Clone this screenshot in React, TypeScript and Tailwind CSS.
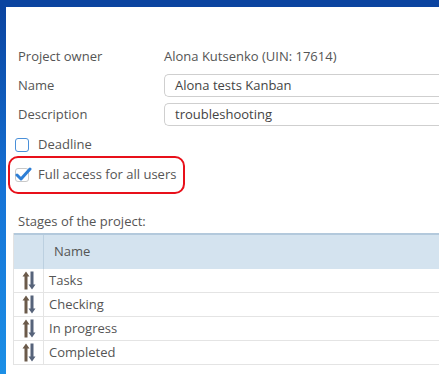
import React from 'react'

function SortIcon() {
  return (
    <svg width="14" height="19" viewBox="0 0 14 19">
      <path d="M4 0.5 L7.5 5.5 H5.5 V18.5 H2.5 V5.5 H0.5 Z" fill="#6b5a4a" />
      <path d="M10 18.5 L13.5 13.5 H11.5 V0.5 H8.5 V13.5 H6.5 Z" fill="#56637a" />
    </svg>
  )
}

const stages = ['Tasks', 'Checking', 'In progress', 'Completed']

export default function App() {
  return (
    <div className="w-[439px] h-[374px] overflow-hidden flex flex-col bg-[#0b44a0] text-[13px] text-[#555]" style={{ fontFamily: '"Open Sans", "Noto Sans", sans-serif' }}>
      <div className="h-[7px] shrink-0" />
      <div className="flex flex-1">
        <div className="w-[6px] bg-gradient-to-b from-[#0b44a0] via-[#1673d6] to-[#1c8fe6]" />
        <div className="flex-1 bg-white pl-[12px] pt-[39px]">
          <div className="flex items-center h-[22px]">
            <div className="w-[146px]">Project owner</div>
            <div>Alona Kutsenko (UIN: 17614)</div>
          </div>
          <div className="flex items-center mt-[6px]">
            <div className="w-[146px]">Name</div>
            <div className="flex-1 h-[23px] border border-[#cfcfcf] border-r-0 rounded-l-[5px] flex items-center px-[10px] text-[#444]">Alona tests Kanban</div>
          </div>
          <div className="flex items-center mt-[6px]">
            <div className="w-[146px]">Description</div>
            <div className="flex-1 h-[23px] border border-[#cfcfcf] border-r-0 rounded-l-[5px] flex items-center px-[10px] text-[#444]">troubleshooting</div>
          </div>
          <div className="flex items-center gap-[9px] mt-[9px] -ml-[3px] h-[20px]">
            <div className="w-[14px] h-[14px] border border-[#4a90d9] rounded-[3px]" />
            <div>Deadline</div>
          </div>
          <div className="mt-[1px] -ml-[10px] w-[177px] h-[38px] border-2 border-[#e8101a] rounded-[10px] flex items-center gap-[9px] pl-[5px]">
            <div className="w-[14px] h-[14px] border border-[#c8c8c8] rounded-[3px] relative bg-white">
              <svg className="absolute -left-[1px] -top-[2px]" width="17" height="15" viewBox="0 0 17 15">
                <path d="M2 8 L6 12 L15 2" stroke="#2e7fd6" strokeWidth="3" fill="none" strokeLinecap="round" strokeLinejoin="round" />
              </svg>
            </div>
            <div>Full access for all users</div>
          </div>
          <div className="mt-[18px] h-[20px] flex items-center">Stages of the project:</div>
          <div className="mt-[1px] -ml-[5px] border-l border-[#e2e2e2]">
            <div className="flex h-[36px] bg-[#d4e3ef] border-t-2 border-[#b3c9dc]">
              <div className="w-[30px] border-r border-[#bcd0e0]" />
              <div className="flex items-center pl-[10px]">Name</div>
            </div>
            {stages.map((s) => (
              <div key={s} className="flex h-[24px] border-b border-[#e4e4e4]">
                <div className="w-[30px] border-r border-[#e4e4e4] flex items-center justify-center">
                  <SortIcon />
                </div>
                <div className="flex items-center pl-[5px]">{s}</div>
              </div>
            ))}
          </div>
        </div>
      </div>
    </div>
  )
}
